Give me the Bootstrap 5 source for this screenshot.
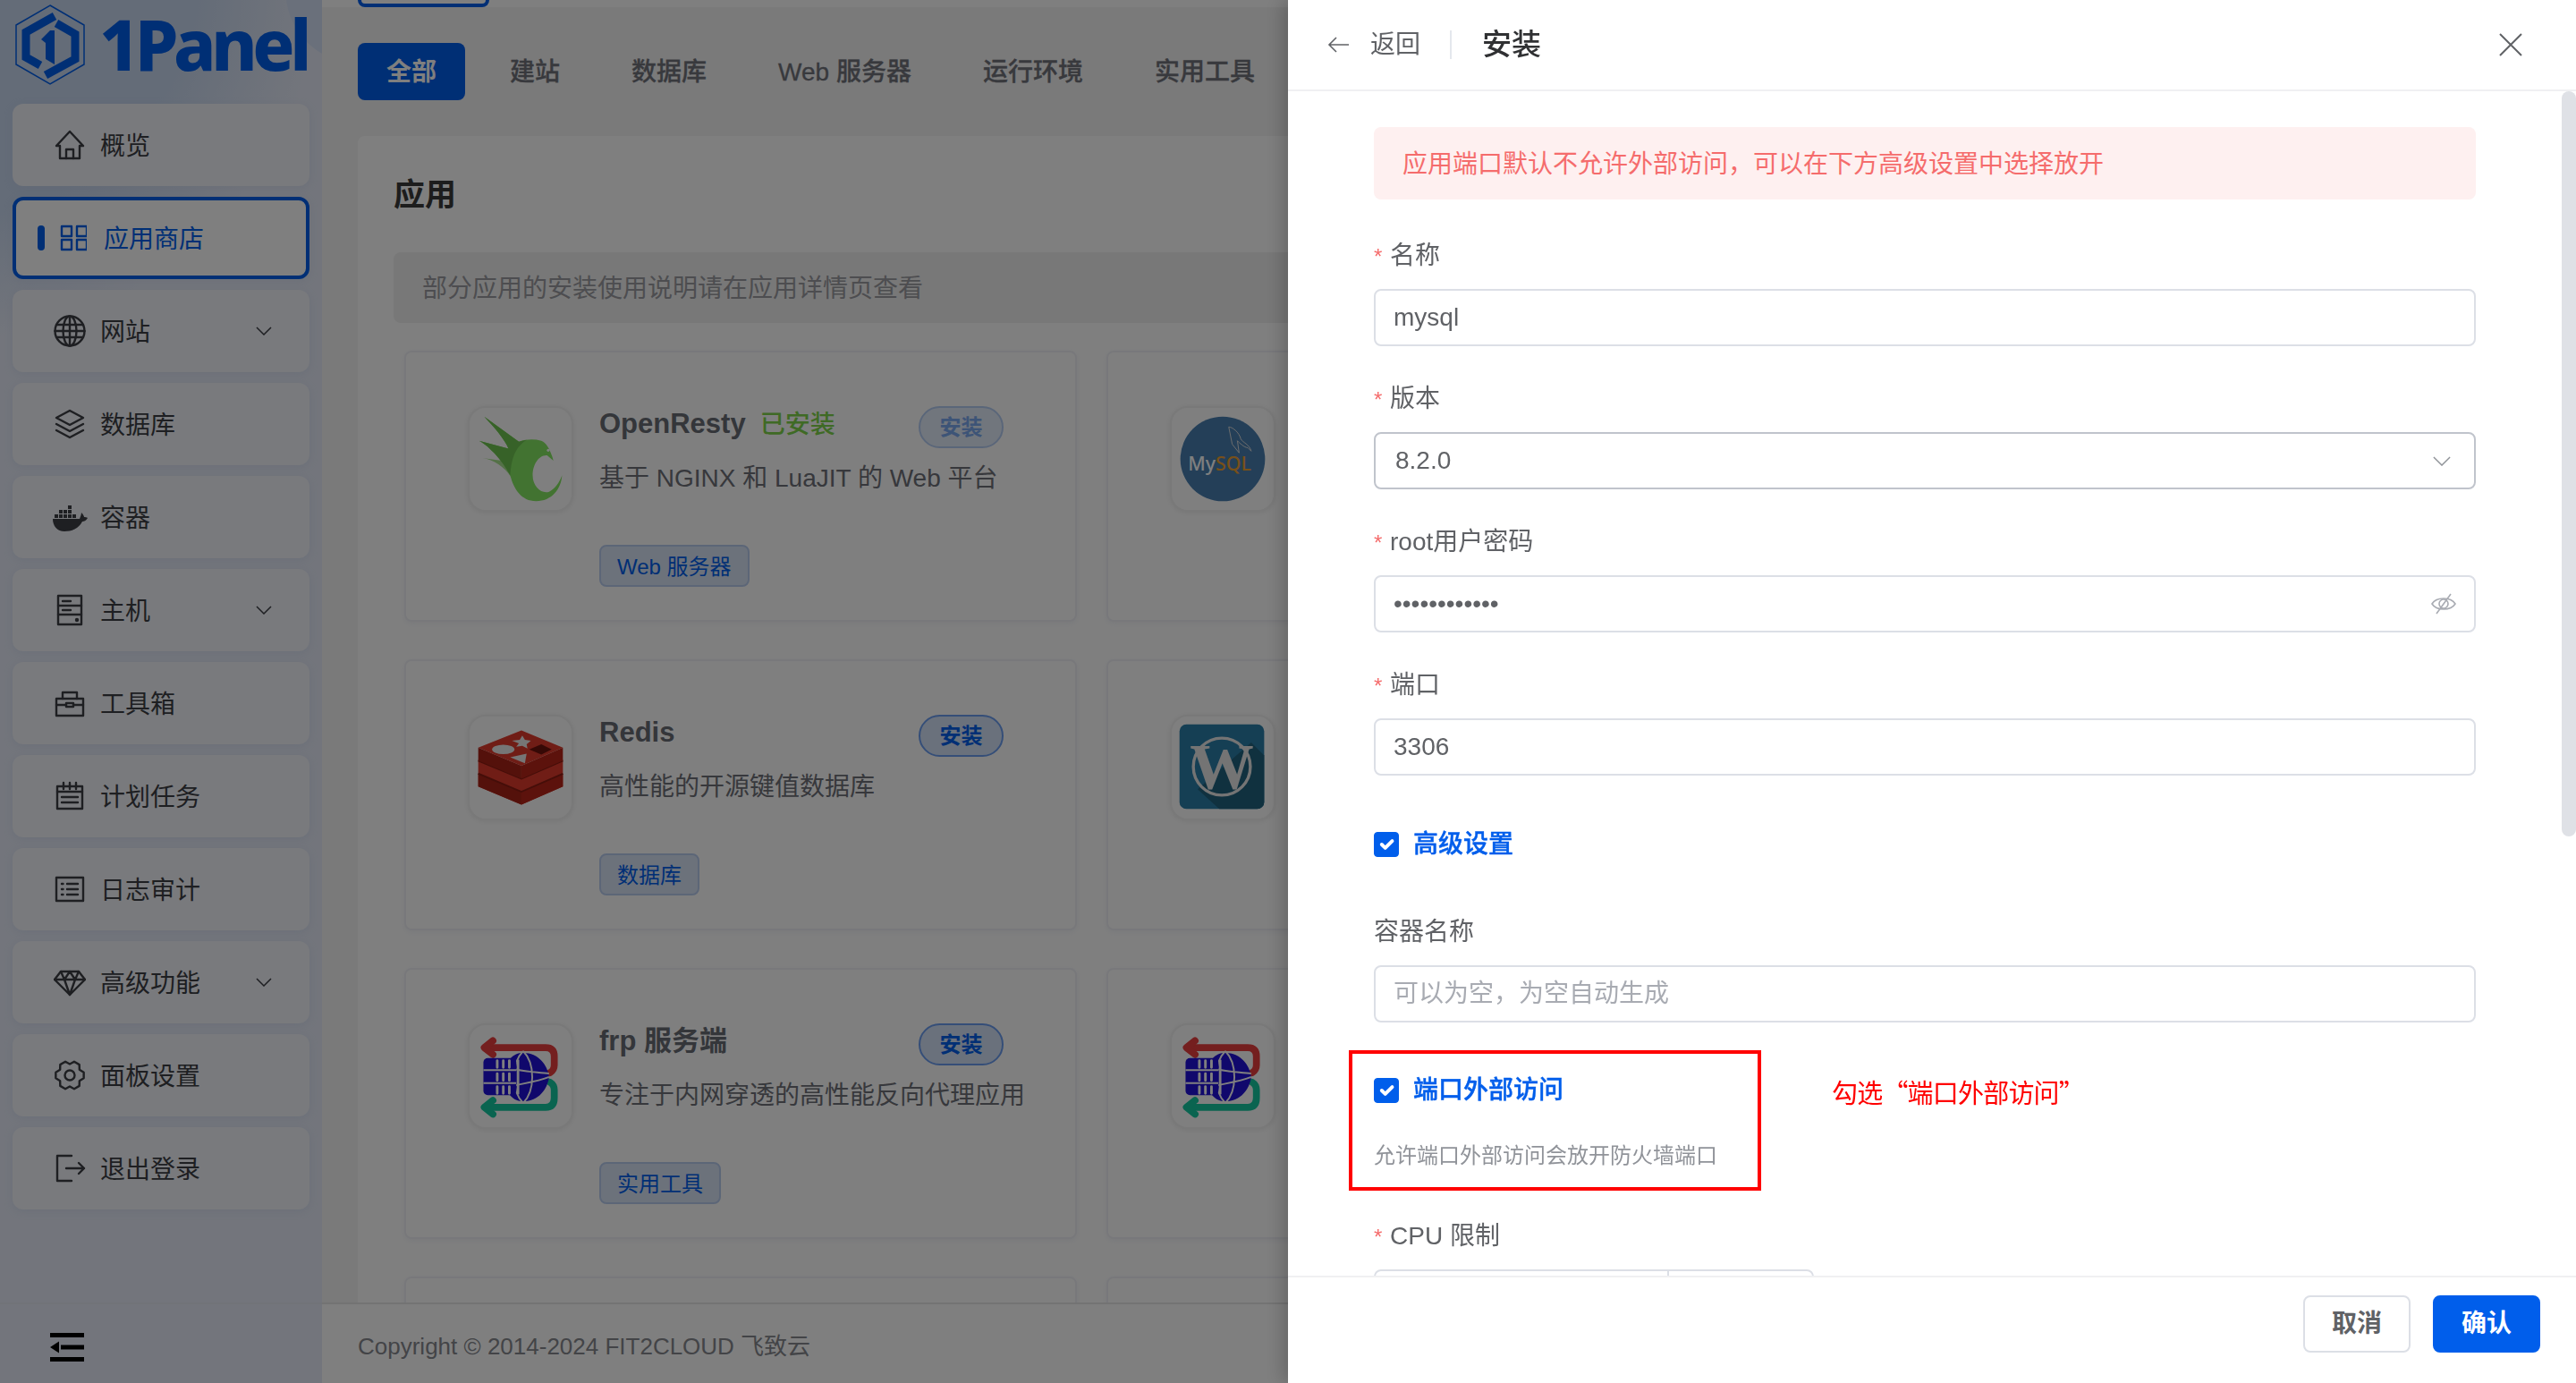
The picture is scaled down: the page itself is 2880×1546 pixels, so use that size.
<!DOCTYPE html>
<html lang="zh-CN">
<head>
  <meta charset="UTF-8">
  <title>1Panel</title>
  <link href="https://cdn.jsdelivr.net/npm/bootstrap@5.3.0/dist/css/bootstrap.min.css" rel="stylesheet">
  <style>
    html, body { height: 100%; }
    body {
      margin: 0; overflow: hidden; height: 1546px;
      font-family: "Liberation Sans", "Noto Sans CJK SC", sans-serif;
      font-size: 28px; color: #606266; background: #f4f4f4;
    }
    .shell { height: 1546px; }

    /* sidebar */
    .side {
      width: 360px; flex: none;
      background:
        radial-gradient(circle at 400px -10px, #d4e0f6 0 80px, transparent 81px),
        radial-gradient(circle at -60px -40px, #c8d8f0 0 280px, transparent 420px),
        #e6ebf8;
    }
    .brand { height: 116px; padding: 5px 0 0 17px; color: #005eeb; }
    .brand-name { font-family: "Noto Sans", sans-serif; font-size: 78px; font-weight: 800; line-height: 88px; letter-spacing: -5.400px; margin-left: 14px; }
    .side-list { padding: 0 14px; gap: 12px; }
    .side-item {
      height: 92px; padding-left: 46px; padding-right: 42px; gap: 16px;
      background: #f2f4fa; border-radius: 12px; color: #3c3e44;
      box-shadow: 0 2px 8px rgba(190, 200, 230, .35);
    }
    .side-item .lbl { padding-top: 3px; }
    .side-item svg.ico { width: 36px; height: 36px; flex: none; fill: none; stroke: currentColor; stroke-width: 2.4; stroke-linejoin: round; stroke-linecap: round; }
    .side-item svg.ico.whale { width: 40px; margin: 0 -2px; stroke: none; fill: currentColor; }
    .side-item .chev { margin-left: auto; flex: none; }
    .side-item.active {
      background: #fff; color: #005eeb; border: 4px solid #005eeb;
      padding-left: 24px; gap: 14px;
    }
    .side-item.active .tick { width: 8px; height: 28px; border-radius: 4px; background: #005eeb; margin-right: 3px; }
    .side-item.active svg.ico { width: 30px; height: 30px; }
    .side-item.active span.lbl { margin-left: 5px; }
    .side-foot { height: 90px; border-top: 2px solid #e2e6f0; padding: 8px 0 0 56px; }

    /* main column */
    .content { flex: 1 1 0; min-width: 0; overflow: hidden; }
    .top-strip { height: 8px; background: #fff; padding-left: 40px; flex: none; }
    .top-strip div { width: 147px; height: 8px; border: 4px solid #005eeb; border-top: 0; border-radius: 0 0 8px 8px; }
    .tabs-row { padding: 40px 0 0 40px; gap: 16px; height: 104px; flex: none; white-space: nowrap; }
    .tab-link { height: 64px; padding: 0 32px; line-height: 66px; color: #70727a; font-weight: 500; border-radius: 8px; -webkit-text-stroke: .3px; }
    .tab-link.on { background: #005eeb; color: #fff; font-weight: 700; -webkit-text-stroke: 0; margin-right: 2px; }
    .apps-panel { flex: 1 1 0; min-height: 0; margin: 40px 0 0 40px; background: #fff; border: 0; border-radius: 8px 0 0 0; padding: 40px; overflow: hidden; }
    .apps-title { font-size: 35px; font-weight: 700; line-height: 52px; height: 50px; margin: 0 0 40px; color: #3a3a3a; }
    .notice-bar { height: 79px; line-height: 81px; padding-left: 32px; background: #f0f0f0; border-radius: 8px; color: #9a9ba0; white-space: nowrap; width: 1400px; }
    .apps-grid { display: grid; grid-template-columns: 752px 752px; column-gap: 33px; row-gap: 42px; margin: 31px 0 0 12px; }
    .app-tile { height: 303px; padding: 60px 0 0 69px; border: 2px solid #f0f1f6; border-radius: 8px; box-shadow: 0 2px 6px rgba(150, 160, 200, .12); gap: 29px; background: #fff; }
    .app-logo { width: 118px; height: 118px; flex: none; border: 2px solid #f2f2f2; border-radius: 20px; box-shadow: 0 1px 6px rgba(0,0,0,.08); background: #fff; }
    .app-logo svg { display: block; width: 114px; height: 114px; }
    .app-body { width: 452px; }
    .app-head { height: 47px; }
    .app-name { font-size: 31px; line-height: 40px; font-weight: 700; color: #696c75; white-space: nowrap; }
    .app-done { color: #7fd44a; font-size: 28px; font-weight: 500; margin-left: 16px; }
    .pill-btn { width: 95px; height: 47px; line-height: 43px; padding: 0; font-size: 24px; font-weight: 700; border: 2px solid #6a9df0; border-radius: 24px; background: #d4e2f8; color: #005eeb; }
    .pill-btn.off { opacity: 1; color: #7aa8ee; background: #e3ecfa; border-color: #b5cdf3; }
    .app-desc { margin-top: 12px; height: 40px; line-height: 44px; color: #6e7078; white-space: nowrap; }
    .app-tag { margin-top: 56px; height: 47px; line-height: 45px; padding: 0 18px; font-size: 24px; font-weight: 400; border: 2px solid #b9cdef; border-radius: 8px; background: #d9e4f7; color: #005eeb; }
    .page-foot { height: 90px; flex: none; background: #fff; border-top: 2px solid #e6e6e6; padding: 6px 0 0 40px; font-size: 26px; color: #86888e; position: relative; z-index: 1; }

    /* dim layer and install drawer */
    .dim-layer { position: fixed; inset: 0; background: rgba(0, 0, 0, .5); z-index: 10; }
    .install-drawer { position: fixed; top: 0; right: 0; bottom: 0; width: 1440px; background: #fff; z-index: 11; box-shadow: -6px 0 20px rgba(0, 0, 0, .2); }
    .drawer-top { height: 102px; flex: none; border-bottom: 2px solid #f0f0f2; padding: 0 60px 0 44px; }
    .back-lbl { margin-left: 24px; color: #606266; }
    .head-sep { width: 2px; height: 32px; background: #e4e7ed; margin: 0 34px 0 33px; }
    .drawer-name { font-size: 33px; font-weight: 500; color: #303133; }
    .drawer-form { flex: 1 1 0; min-height: 0; overflow: hidden; padding: 40px 112px 0 96px; position: relative; }
    .rail { position: absolute; top: 0; right: 0; width: 16px; height: 833px; background: #dfe1e6; border-radius: 8px; }
    .warn-box { height: 81px; line-height: 83px; padding: 0 0 0 32px; margin: 0; background: #fef0f0; color: #f56c6c; border: 0; border-radius: 8px; }
    .f-label { height: 40px; line-height: 42px; margin: 0 0 18px; display: block; color: #606266; }
    .f-label i { font-style: normal; color: #f56c6c; font-size: 24px; display: inline-block; width: 18px; }
    .f-row { margin-top: 38px; }
    .f-row.first { margin-top: 42px; }
    .f-row.after-chk { margin-top: 56px; }
    .f-row.after-hint { margin-top: 52px; }
    .f-input.form-control, .f-input.form-select {
      height: 64px; padding: 0 20px; font-size: 28px; color: #606266;
      border: 2px solid #dcdfe6; border-radius: 8px; box-shadow: none;
    }
    .f-input::placeholder { color: #a8abb2; }
    .f-input.form-select {
      border-color: #c0c4cc; padding-left: 22px;
      background-image: url("data:image/svg+xml,%3csvg xmlns='http://www.w3.org/2000/svg' viewBox='0 0 22 12'%3e%3cpath fill='none' stroke='%23909399' stroke-width='1.6' d='M1 1l10 10L21 1'/%3e%3c/svg%3e");
      background-size: 20px 11px; background-position: right 26px center;
    }
    .eye-mark { position: absolute; right: 22px; top: 18px; width: 28px; height: 28px; }
    .chk-row { gap: 16px; color: #005eeb; font-weight: 500; -webkit-text-stroke: .4px; min-height: 0; padding: 0; margin: 56px 0 0; }
    .chk-row.port-chk { margin-top: 55px; }
    .chk-row .form-check-input { width: 28px; height: 28px; margin: 0; float: none; border-radius: 4px; background-color: #005eeb; border-color: #005eeb; }
    .callout-box { position: absolute; left: 68px; top: 1072px; width: 461px; height: 157px; border: 4px solid #f00; pointer-events: none; }
    .callout-txt { position: absolute; left: 608px; top: 1098px; color: #f00; font-size: 29px; line-height: 40px; font-family: "Noto Sans CJK SC", sans-serif; white-space: nowrap; letter-spacing: -.8px; }
    .hint-txt { font-size: 24px; color: #909399; line-height: 34px; margin-top: 35px; }
    .cpu-stub { width: 492px; height: 64px; border: 2px solid #dcdfe6; border-radius: 8px; position: relative; }
    .cpu-stub::after { content: ""; position: absolute; left: 326px; top: 0; bottom: 0; width: 2px; background: #dcdfe6; }
    .drawer-bottom { height: 120px; flex: none; border-top: 2px solid #f0f0f2; padding: 20px 40px 0 0; gap: 25px; background: #fff; position: relative; }
    .act-btn { width: 120px; height: 64px; padding: 0; font-size: 28px; font-weight: 700; border-radius: 8px; line-height: 60px; }
    .act-btn.plain { border: 2px solid #dcdfe6; background: #fff; color: #606266; }
    .act-btn.main-act { border: 2px solid #005eeb; background: #005eeb; color: #fff; }
  </style>
</head>
<body>
  <div class="shell d-flex">
    <!-- Sidebar -->
    <aside class="side d-flex flex-column">
      <div class="brand d-flex">
        <svg width="80" height="90" viewBox="0 0 80 90" fill="none">
          <path d="M39 1 L77 23 V67 L39 89 L1 67 V23 Z" stroke="#005eeb" stroke-width="1.5"/>
          <path d="M44 13 L12 31 V59 L28 68" stroke="#005eeb" stroke-width="9"/>
          <path d="M46 21 L67 33 V61 L34 79" stroke="#005eeb" stroke-width="9"/>
          <path d="M29 39 L39 29 H44 V67 L34 61 V43 Z" fill="#005eeb"/>
        </svg>
        <div class="brand-name">1Panel</div>
      </div>
      <nav class="side-list d-flex flex-column flex-grow-1">
        <div class="side-item d-flex align-items-center">
          <svg class="ico" viewBox="0 0 36 36"><path d="M3 19 L18 3 L33 19 H29 V33 H7 V19 Z"/><path d="M14 33 V23 H22 V33"/></svg>
          <span class="lbl">概览</span>
        </div>
        <div class="side-item active d-flex align-items-center">
          <span class="tick"></span>
          <svg class="ico" viewBox="0 0 30 30"><rect x="2" y="2" width="11" height="11"/><rect x="19" y="2" width="11" height="11"/><rect x="2" y="17" width="11" height="11"/><rect x="19" y="17" width="11" height="11"/></svg>
          <span class="lbl">应用商店</span>
        </div>
        <div class="side-item d-flex align-items-center">
          <svg class="ico" viewBox="0 0 36 36"><circle cx="18" cy="18" r="16.5"/><ellipse cx="18" cy="18" rx="7.5" ry="16.5"/><path d="M18 2V34M3 11H33M3 25H33M1.5 18H34.5"/></svg>
          <span class="lbl">网站</span>
          <svg class="chev" width="18" height="10" viewBox="0 0 18 10" fill="none" stroke="#3c3e44" stroke-width="1.5"><path d="M1 1l8 8 8-8"/></svg>
        </div>
        <div class="side-item d-flex align-items-center">
          <svg class="ico" viewBox="0 0 36 36"><path d="M18 3 L33 11 L18 19 L3 11 Z"/><path d="M3 18 L18 26 L33 18"/><path d="M3 25 L18 33 L33 25"/></svg>
          <span class="lbl">数据库</span>
        </div>
        <div class="side-item d-flex align-items-center">
          <svg class="ico whale" viewBox="0 0 40 36">
            <path d="M1 20 H31 C32 17 33 15 33 13 C35 15 36 17 36 18 C37 18 39 18 40 19 C38 22 36 23 34 23 C30 31 22 34 14 34 C6 34 1 28 1 20 Z"/>
            <path d="M3 15h4v4H3zM8 15h4v4H8zM13 15h4v4h-4zM18 15h4v4h-4zM23 15h4v4h-4zM8 10h4v4H8zM13 10h4v4h-4zM18 10h4v4h-4zM18 5h4v4h-4z"/>
          </svg>
          <span class="lbl">容器</span>
        </div>
        <div class="side-item d-flex align-items-center">
          <svg class="ico" viewBox="0 0 36 36"><rect x="5" y="2" width="26" height="32"/><path d="M5 13H31M5 23H31M10 8H19M10 18H19"/><circle cx="26" cy="29" r="1" fill="currentColor"/></svg>
          <span class="lbl">主机</span>
          <svg class="chev" width="18" height="10" viewBox="0 0 18 10" fill="none" stroke="#3c3e44" stroke-width="1.5"><path d="M1 1l8 8 8-8"/></svg>
        </div>
        <div class="side-item d-flex align-items-center">
          <svg class="ico" viewBox="0 0 36 36"><path d="M3 13 H33 V32 H3 Z"/><path d="M10 13 V6 H26 V13"/><path d="M3 20 H14 M22 20 H33"/><rect x="14" y="18" width="8" height="4"/></svg>
          <span class="lbl">工具箱</span>
        </div>
        <div class="side-item d-flex align-items-center">
          <svg class="ico" viewBox="0 0 36 36"><rect x="4" y="7" width="28" height="25"/><path d="M11 3V10M18 3V10M25 3V10M4 13H32M9 19H27M9 25H27" /></svg>
          <span class="lbl">计划任务</span>
        </div>
        <div class="side-item d-flex align-items-center">
          <svg class="ico" viewBox="0 0 36 36"><rect x="3" y="5" width="30" height="26"/><path d="M15 12H27M15 18H27M15 24H27M9 12H10.5M9 18H10.5M9 24H10.5"/></svg>
          <span class="lbl">日志审计</span>
        </div>
        <div class="side-item d-flex align-items-center">
          <svg class="ico" viewBox="0 0 36 36"><path d="M8 6 H28 L35 15 L18 32 L1 15 Z"/><path d="M1 15 H35 M12 15 L18 32 L24 15 M8 6 L12 15 L18 6 L24 15 L28 6"/></svg>
          <span class="lbl">高级功能</span>
          <svg class="chev" width="18" height="10" viewBox="0 0 18 10" fill="none" stroke="#3c3e44" stroke-width="1.5"><path d="M1 1l8 8 8-8"/></svg>
        </div>
        <div class="side-item d-flex align-items-center">
          <svg class="ico" viewBox="0 0 36 36"><path d="M33.65 14.67 33.65 21.33 28.83 24.25 28.7 29.9 22.94 33.2 18 30.5 13.06 33.2 7.3 29.9 7.17 24.25 2.35 21.33 2.35 14.67 7.17 11.75 7.3 6.1 13.06 2.78 18 5.5 22.94 2.78 28.7 6.1 28.83 11.75Z"/><circle cx="18" cy="18" r="5.5"/></svg>
          <span class="lbl">面板设置</span>
        </div>
        <div class="side-item d-flex align-items-center">
          <svg class="ico" viewBox="0 0 36 36"><path d="M20 4 H4 V32 H20"/><path d="M14 18 H34 M28 12 L34 18 L28 24"/></svg>
          <span class="lbl">退出登录</span>
        </div>
      </nav>
      <div class="side-foot d-flex align-items-center">
        <svg width="38" height="32" viewBox="0 0 38 32" fill="#000"><rect width="38" height="5"/><rect x="12" y="13.5" width="26" height="5"/><rect y="27" width="38" height="5"/><path d="M10 9.500V22.500L0 16Z"/></svg>
      </div>
    </aside>

    <!-- Main content -->
    <main class="content d-flex flex-column">
      <div class="top-strip"><div></div></div>
      <div class="tabs-row d-flex">
        <a class="tab-link text-decoration-none on">全部</a>
        <a class="tab-link text-decoration-none">建站</a>
        <a class="tab-link text-decoration-none">数据库</a>
        <a class="tab-link text-decoration-none">Web 服务器</a>
        <a class="tab-link text-decoration-none">运行环境</a>
        <a class="tab-link text-decoration-none">实用工具</a>
      </div>
      <section class="apps-panel card">
        <h1 class="apps-title">应用</h1>
        <div class="notice-bar">部分应用的安装使用说明请在应用详情页查看</div>
        <div class="apps-grid">
          <!-- OpenResty -->
          <div class="app-tile d-flex">
            <div class="app-logo">
              <svg viewBox="0 0 118 118">
                <path d="M15 58 C28 60 40 68 48 80 L45 62Z" fill="#a8e28f"/>
                <path d="M17 10 C28 22 40 35 45 47 L11 38 C22 44 36 58 47 78 C51 94 60 108 77 108 C95 108 106 94 107 78 C104 86 99 94 92 97 C84 100 73 92 73 78 C73 66 80 54 90 55 L97 61 C94 50 90 41 83 38 C75 36 66 36 57 39 Z" fill="#84e662"/>
                <path d="M17 10 C28 22 40 35 45 47 L11 38 C22 44 36 58 47 78 C48 60 52 46 66 37 L57 39Z" fill="#6fc451"/>
                <circle cx="91" cy="49" r="1.6" fill="#fff"/>
              </svg>
            </div>
            <div class="app-body">
              <div class="app-head d-flex justify-content-between align-items-start">
                <div class="app-name">OpenResty<span class="app-done">已安装</span></div>
                <button class="pill-btn off btn" type="button">安装</button>
              </div>
              <div class="app-desc">基于 NGINX 和 LuaJIT 的 Web 平台</div>
              <span class="app-tag d-inline-block">Web 服务器</span>
            </div>
          </div>
          <!-- MySQL -->
          <div class="app-tile d-flex">
            <div class="app-logo">
              <svg viewBox="0 0 118 118">
                <circle cx="59" cy="59" r="49" fill="#487eb0"/>
                <path d="M66 22 C70 22 78 28 80 36 C82 40 90 42 92 50 L88 46 C84 46 78 40 76 38 L78 52 L70 42 Z" fill="none" stroke="#ddd" stroke-width="1"/>
                <text x="19" y="72" font-family="Noto Sans, sans-serif" font-size="22" font-weight="500" fill="#fff">My<tspan fill="#f0a030">SQL</tspan></text>
              </svg>
            </div>
            <div class="app-body"></div>
          </div>
          <!-- Redis -->
          <div class="app-tile d-flex">
            <div class="app-logo">
              <svg viewBox="0 0 118 118">
                <path d="M10 66 L60 87 L108 66 V81 L60 102 L10 81 Z" fill="#e03a2c"/>
                <path d="M10 81 L60 102 V87 L10 66Z" fill="#a82216"/>
                <path d="M108 81 L60 102 V87 L108 66Z" fill="#b82418"/>
                <path d="M10 50 L60 71 L108 50 V66 L60 87 L10 66 Z" fill="#e03a2c"/>
                <path d="M10 51 L60 72 L108 51" fill="none" stroke="#8a1c12" stroke-width="2"/>
                <path d="M10 66 L60 87 L108 66" fill="none" stroke="#8a1c12" stroke-width="2"/>
                <path d="M10 36 V51 L60 72 V57Z" fill="#a82216"/>
                <path d="M108 36 V51 L60 72 V57Z" fill="#b82418"/>
                <path d="M60 16 L108 36 L60 57 L10 36 Z" fill="#e03a2c"/>
                <ellipse cx="39" cy="38" rx="13" ry="5.5" fill="#ececec"/>
                <path d="M61 22 L64 27 L71 28 L66 32 L67 37 L61 34 L54 35 L57 31 L49 28 L58 27 Z" fill="#ececec"/>
                <path d="M47 47 L66 43 L64 54 Z" fill="#ececec"/>
                <path d="M69 38 L83 32 L95 38 L83 44 Z" fill="#6d130c"/>
              </svg>
            </div>
            <div class="app-body">
              <div class="app-head d-flex justify-content-between align-items-start">
                <div class="app-name">Redis</div>
                <button class="pill-btn btn" type="button">安装</button>
              </div>
              <div class="app-desc">高性能的开源键值数据库</div>
              <span class="app-tag d-inline-block">数据库</span>
            </div>
          </div>
          <!-- WordPress -->
          <div class="app-tile d-flex">
            <div class="app-logo">
              <svg viewBox="0 0 118 118">
                <rect x="9" y="9" width="98" height="98" rx="8" fill="#2a7ea8"/>
                <path d="M30 84 L92 30 L107 45 V99 A8 8 0 0 1 99 107 H55 Z" fill="#20627f"/>
                <circle cx="58" cy="58" r="33" fill="none" stroke="#e8e8e8" stroke-width="3.500"/>
                <text x="58" y="83" text-anchor="middle" font-family="Liberation Serif, serif" font-size="74" font-weight="700" fill="#e8e8e8">W</text>
              </svg>
            </div>
            <div class="app-body"></div>
          </div>
          <!-- frp server -->
          <div class="app-tile d-flex">
            <div class="app-logo">
              <svg viewBox="0 0 118 118"><use href="#frpArt"/></svg>
            </div>
            <div class="app-body">
              <div class="app-head d-flex justify-content-between align-items-start">
                <div class="app-name">frp 服务端</div>
                <button class="pill-btn btn" type="button">安装</button>
              </div>
              <div class="app-desc">专注于内网穿透的高性能反向代理应用</div>
              <span class="app-tag d-inline-block">实用工具</span>
            </div>
          </div>
          <!-- frp client -->
          <div class="app-tile d-flex">
            <div class="app-logo">
              <svg viewBox="0 0 118 118">
                <g id="frpArt">
                  <path d="M20 26 H88 Q98 26 98 36 V46 Q98 52 93 55" fill="none" stroke="#e83e3e" stroke-width="8" stroke-linecap="round"/>
                  <path d="M27 18 L17 26 L27 34" fill="none" stroke="#e83e3e" stroke-width="8" stroke-linecap="round" stroke-linejoin="round"/>
                  <path d="M93 66 Q98 69 98 75 V84 Q98 95 88 95 H20" fill="none" stroke="#14c8a0" stroke-width="8" stroke-linecap="round"/>
                  <path d="M27 87 L17 95 L27 103" fill="none" stroke="#14c8a0" stroke-width="8" stroke-linecap="round" stroke-linejoin="round"/>
                  <path d="M62 32 C80 32 90 46 92 60 C90 74 80 88 62 88 C50 88 42 80 40 60 C42 40 50 32 62 32Z" fill="#2010d8"/>
                  <path d="M62 30 C48 44 48 76 62 90 M62 30 C76 44 76 76 62 90 M42 48 C56 54 78 54 92 56 M42 72 C56 68 78 66 92 60" fill="none" stroke="#fff" stroke-width="2"/>
                  <path d="M56 40 V80" fill="none" stroke="#fff" stroke-width="3"/>
                  <rect x="16" y="38" width="38" height="43" rx="5" fill="#2010d8"/>
                  <path d="M16 52 H54 M16 67 H54" stroke="#fff" stroke-width="2"/>
                  <path d="M32 41V49M39 41V49M46 41V49M32 56V64M39 56V64M46 56V64M32 71V79M39 71V79M46 71V79" stroke="#fff" stroke-width="3" stroke-linecap="round"/>
                </g>
              </svg>
            </div>
            <div class="app-body"></div>
          </div>
          <div class="app-tile d-flex"></div>
          <div class="app-tile d-flex"></div>
        </div>
      </section>
      <footer class="page-foot d-flex align-items-center">Copyright © 2014-2024 FIT2CLOUD 飞致云</footer>
    </main>
  </div>

  <div class="dim-layer"></div>

  <!-- Install drawer -->
  <div class="install-drawer d-flex flex-column">
    <header class="drawer-top d-flex align-items-center">
      <svg width="24" height="20" viewBox="0 0 24 20" fill="none" stroke="#606266" stroke-width="1.6"><path d="M24 10H2M10 2L2 10l8 8"/></svg>
      <span class="back-lbl">返回</span>
      <span class="head-sep"></span>
      <span class="drawer-name">安装</span>
      <svg class="ms-auto" width="26" height="26" viewBox="0 0 26 26" fill="none" stroke="#606266" stroke-width="2"><path d="M1 1l24 24M25 1L1 25"/></svg>
    </header>
    <form class="drawer-form">
      <div class="rail"></div>
      <div class="warn-box alert" role="alert">应用端口默认不允许外部访问，可以在下方高级设置中选择放开</div>
      <div class="f-row first">
        <label class="f-label"><i>*</i>名称</label>
        <input class="f-input form-control" type="text" value="mysql">
      </div>
      <div class="f-row">
        <label class="f-label"><i>*</i>版本</label>
        <select class="f-input form-select"><option>8.2.0</option></select>
      </div>
      <div class="f-row">
        <label class="f-label"><i>*</i>root用户密码</label>
        <div class="position-relative">
          <input class="f-input form-control" type="password" value="mysqlpasswd1">
          <svg class="eye-mark" viewBox="0 0 28 28" fill="none" stroke="#a8abb2" stroke-width="1.6"><path d="M1 14C6 6 22 6 27 14C22 22 6 22 1 14Z"/><circle cx="14" cy="14" r="5"/><path d="M22 3L6 25"/></svg>
        </div>
      </div>
      <div class="f-row">
        <label class="f-label"><i>*</i>端口</label>
        <input class="f-input form-control" type="text" value="3306">
      </div>
      <div class="form-check chk-row d-flex align-items-center">
        <input class="form-check-input" type="checkbox" checked>
        <label>高级设置</label>
      </div>
      <div class="f-row after-chk">
        <label class="f-label">容器名称</label>
        <input class="f-input form-control" type="text" placeholder="可以为空，为空自动生成">
      </div>
      <div class="form-check chk-row port-chk d-flex align-items-center">
        <input class="form-check-input" type="checkbox" checked>
        <label>端口外部访问</label>
      </div>
      <div class="hint-txt">允许端口外部访问会放开防火墙端口</div>
      <div class="f-row after-hint">
        <label class="f-label"><i>*</i>CPU 限制</label>
        <div class="cpu-stub"></div>
      </div>
      <div class="callout-box"></div>
      <div class="callout-txt">勾选“端口外部访问”</div>
    </form>
    <footer class="drawer-bottom d-flex justify-content-end">
      <button class="act-btn plain btn" type="button">取消</button>
      <button class="act-btn main-act btn" type="button">确认</button>
    </footer>
  </div>
  <script src="https://cdn.jsdelivr.net/npm/bootstrap@5.3.0/dist/js/bootstrap.bundle.min.js"></script>
</body>
</html>
